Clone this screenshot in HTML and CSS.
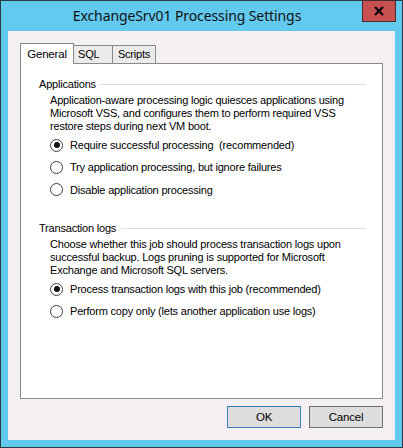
FILE: index.html
```html
<!DOCTYPE html>
<html>
<head>
<meta charset="utf-8">
<link rel="stylesheet" href="styles.css">
</head>
<body>
<div class="window">
  <div class="titlebar">
    <div class="title">ExchangeSrv01 Processing Settings</div>
    <div class="close">
      <svg width="12" height="10" viewBox="0 0 12 10"><path d="M2 1 L10 9 M10 1 L2 9" stroke="#000" stroke-width="2.2" fill="none"/></svg>
    </div>
  </div>
  <div class="client">
    <div class="tabs">
      <div class="tab active">General</div>
      <div class="tab sql">SQL</div>
      <div class="tab scripts">Scripts</div>
    </div>
    <div class="panel">
      <div class="group-head"><span>Applications</span><div class="rule"></div></div>
      <div class="para">Application-aware processing logic quiesces applications using Microsoft VSS, and configures them to perform required VSS restore steps during next VM boot.</div>
      <div class="radios first">
        <div class="radio-row"><span class="radio checked"></span><span>Require successful processing&nbsp; (recommended)</span></div>
        <div class="radio-row"><span class="radio"></span><span>Try application processing, but ignore failures</span></div>
        <div class="radio-row"><span class="radio"></span><span>Disable application processing</span></div>
      </div>
      <div class="group-head second"><span>Transaction logs</span><div class="rule"></div></div>
      <div class="para">Choose whether this job should process transaction logs upon successful backup. Logs pruning is supported for Microsoft Exchange and Microsoft SQL servers.</div>
      <div class="radios">
        <div class="radio-row"><span class="radio checked"></span><span>Process transaction logs with this job (recommended)</span></div>
        <div class="radio-row"><span class="radio"></span><span>Perform copy only (lets another application use logs)</span></div>
      </div>
    </div>
    <div class="buttons">
      <div class="btn default">OK</div>
      <div class="btn">Cancel</div>
    </div>
  </div>
</div>
</body>
</html>
```
FILE: styles.css
```css
* { box-sizing: border-box; }
html, body { margin: 0; padding: 0; }
body {
  width: 403px;
  height: 448px;
  font-family: "Liberation Sans", Arial, sans-serif;
  font-size: 11px;
  letter-spacing: -0.2px;
  color: #000;
}
.window {
  width: 403px;
  height: 448px;
  border: 1px solid #2d3b44;
  background: #62c9ef;
  padding: 0 7px 7px 7px;
  display: flex;
  flex-direction: column;
}
.titlebar {
  height: 30px;
  display: flex;
  align-items: flex-start;
  margin-right: -1px;
}
.title {
  flex: 1;
  text-align: center;
  font-family: "Noto Sans", "Open Sans", sans-serif;
  font-size: 14px;
  line-height: 29px;
  color: #111;
  letter-spacing: -0.1px;
  padding-left: 4px;
}
.close {
  margin-top: -1px;
  width: 34px;
  height: 22px;
  background: #c75050;
  border: 1px solid #4a2a2a;
  display: flex;
  align-items: center;
  justify-content: center;
}
.client {
  height: 409px;
  background: #f5f0f4;
  padding: 12px 12px 12px 12px;
  display: flex;
  flex-direction: column;
}
.tabs {
  display: flex;
  align-items: flex-end;
  height: 20px;
  position: relative;
  z-index: 1;
}
.tab {
  border: 1px solid #8a8a8a;
  border-bottom: none;
  line-height: 16px;
  height: 18px;
  background: #ecebec;
  text-align: center;
}
.tab.active {
  height: 21px;
  margin-bottom: -1px;
  width: 54px;
  background: #fff;
  line-height: 19px;
  padding-top: 1px;
  font-size: 11.5px;
}
.tab.sql { width: 40px; margin-left: -1px; text-align: left; padding-left: 4px; }
.tab.scripts { width: 44px; margin-left: -1px; }
.panel {
  height: 336px;
  background: #fff;
  border: 1px solid #8a8a8a;
  padding: 14px 16px 0 18px;
}
.group-head {
  display: flex;
  align-items: center;
  height: 13px;
  line-height: 13px;
}
.group-head.second { margin-top: 21px; }
.group-head .rule {
  flex: 1;
  height: 1px;
  background: #d2dde7;
  margin-left: 5px;
}
.para {
  margin-top: 3px;
  padding-left: 11px;
  line-height: 13px;
  width: 330px;
}
.radios {
  margin-top: 1px;
  padding-left: 11px;
}
.radio-row {
  height: 22px;
  display: flex;
  align-items: center;
}
.radio-row:nth-child(3) { height: 23px; }
.radio {
  width: 13px;
  height: 13px;
  border: 1px solid #3f3f3f;
  border-radius: 50%;
  background: #fff;
  margin-right: 7px;
  display: flex;
  align-items: center;
  justify-content: center;
  flex: none;
}
.radio.checked::after {
  content: "";
  width: 6px;
  height: 6px;
  border-radius: 50%;
  background: #111;
}
.buttons {
  display: flex;
  justify-content: flex-end;
  gap: 8px;
  margin-top: 7px;
}
.btn {
  width: 74px;
  height: 22px;
  background: #dddddd;
  border: 1px solid #707070;
  text-align: center;
  line-height: 20px;
  font-size: 11.5px;
}
.btn.default { border-color: #3c7fb1; }
```
